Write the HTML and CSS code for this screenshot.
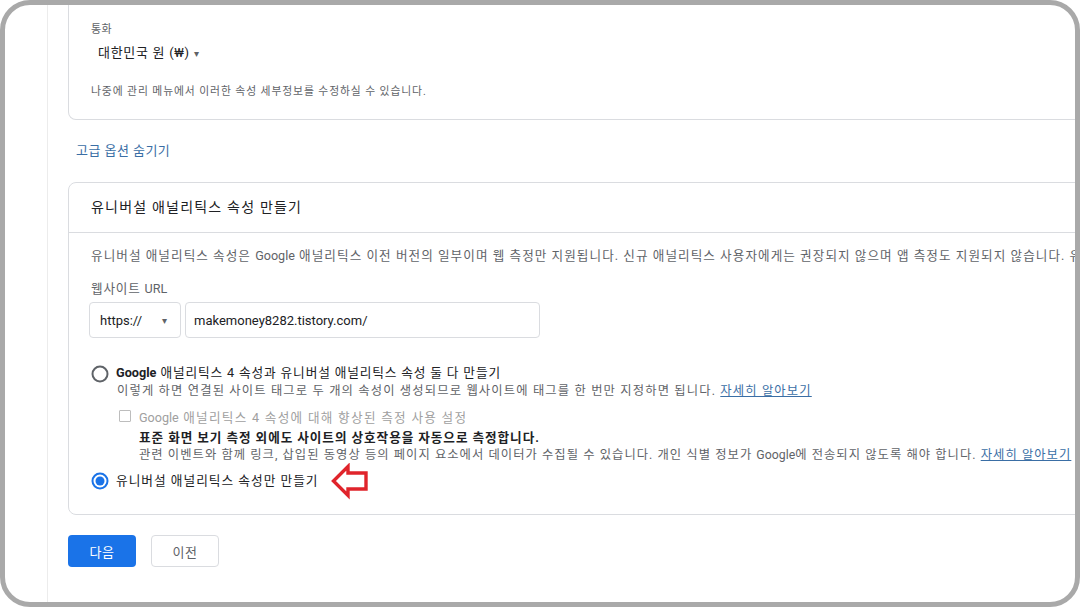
FILE: index.html
```html
<!DOCTYPE html>
<html lang="ko">
<head>
<meta charset="utf-8">
<link rel="stylesheet" href="styles.css">
</head>
<body>
<div class="frame">
  <div class="gutter"></div>
  <div class="panel">
    <div class="card card-top">
      <div class="small-label">통화</div>
      <div class="currency">대한민국 원 (₩) <span class="caret">▾</span></div>
      <div class="small-note">나중에 관리 메뉴에서 이러한 속성 세부정보를 수정하실 수 있습니다.</div>
    </div>

    <div class="adv-link">고급 옵션 숨기기</div>

    <div class="card card-ua">
      <div class="card-head">유니버설 애널리틱스 속성 만들기</div>
      <div class="card-body">
        <div class="desc">유니버설 애널리틱스 속성은 <span class="latin">Google</span> 애널리틱스 이전 버전의 일부이며 웹 측정만 지원됩니다. 신규 애널리틱스 사용자에게는 권장되지 않으며 앱 측정도 지원되지 않습니다. 유니</div>
        <div class="field-label">웹사이트 <span class="latin">URL</span></div>
        <div class="url-row">
          <div class="select-box"><span>https://</span><span class="sel-caret">▾</span></div>
          <div class="text-box">makemoney8282.tistory.com/</div>
        </div>

        <div class="option opt1">
          <svg class="radio" width="18" height="18" viewBox="0 0 18 18"><circle cx="9" cy="9" r="7.5" fill="none" stroke="#5f6368" stroke-width="2"/></svg>
          <div class="opt-text">
            <div class="opt-label"><b class="latin">Google</b> 애널리틱스 4 속성과 유니버설 애널리틱스 속성 둘 다 만들기</div>
            <div class="opt-sub">이렇게 하면 연결된 사이트 태그로 두 개의 속성이 생성되므로 웹사이트에 태그를 한 번만 지정하면 됩니다. <span class="link">자세히 알아보기</span></div>
          </div>
        </div>

        <div class="check-row">
          <span class="checkbox"></span>
          <span class="check-label"><span class="latin">Google</span> 애널리틱스 4 속성에 대해 향상된 측정 사용 설정</span>
        </div>
        <div class="enh-bold">표준 화면 보기 측정 외에도 사이트의 상호작용을 자동으로 측정합니다.</div>
        <div class="enh-sub">관련 이벤트와 함께 링크, 삽입된 동영상 등의 페이지 요소에서 데이터가 수집될 수 있습니다. 개인 식별 정보가 <span class="latin">Google</span>에 전송되지 않도록 해야 합니다. <span class="link">자세히 알아보기</span></div>

        <div class="option opt2">
          <svg class="radio" width="18" height="18" viewBox="0 0 18 18"><circle cx="9" cy="9" r="7.5" fill="none" stroke="#1a73e8" stroke-width="2"/><circle cx="9" cy="9" r="4.5" fill="#1a73e8"/></svg>
          <div class="opt-label opt2-label">유니버설 애널리틱스 속성만 만들기</div>
          <svg class="arrow" width="38" height="37" viewBox="0 0 38 37"><polygon points="2.5,18 17,3.5 17,10 35,10 35,26 17,26 17,32.5" fill="#fff" stroke="#e0242b" stroke-width="3.4" stroke-linejoin="miter"/></svg>
        </div>
      </div>
    </div>

    <div class="buttons">
      <div class="btn btn-primary">다음</div>
      <div class="btn btn-secondary">이전</div>
    </div>
  </div>
</div>
</body>
</html>
```

FILE: styles.css
```css
html, body {
  margin: 0;
  padding: 0;
  background: #fff;
}
body {
  font-family: Roboto, "Noto Sans CJK KR", sans-serif;
  color: #202124;
}
.latin {
  letter-spacing: 0;
}
.frame {
  width: 1080px;
  height: 607px;
  box-sizing: border-box;
  border: 5px solid #a9a9a9;
  border-radius: 30px;
  overflow: hidden;
  display: flex;
  background: #fff;
}
.gutter {
  width: 42px;
  flex: none;
  border-right: 1px solid #ececec;
}
.panel {
  flex: none;
  width: 1200px;
  padding-left: 20px;
}
.card {
  width: 1100px;
  border: 1px solid #dadce0;
  border-radius: 8px;
  box-sizing: border-box;
}
.card-top {
  border-top: none;
  border-radius: 0 0 8px 8px;
  padding: 17px 0 19px 22px;
}
.small-label {
  font-size: 11px;
  line-height: 16px;
  color: #5f6368;
  letter-spacing: 0.5px;
}
.currency {
  margin-top: 5px;
  padding-left: 7px;
  font-size: 13px;
  line-height: 20px;
  color: #202124;
  letter-spacing: 0.7px;
}
.caret {
  font-size: 10px;
  color: #5f6368;
}
.small-note {
  margin-top: 20px;
  font-size: 10.8px;
  line-height: 16px;
  color: #5f6368;
  letter-spacing: 0.9px;
}
.adv-link {
  margin: 21px 0 21px 8px;
  font-size: 13px;
  line-height: 20px;
  color: #3a6ea5;
  letter-spacing: 0.45px;
}
.card-head {
  padding: 13px 22px 14px;
  font-size: 14px;
  line-height: 22px;
  color: #202124;
  border-bottom: 1px solid #dadce0;
  letter-spacing: 1.2px;
}
.card-body {
  padding: 14px 0 23px 22px;
}
.desc {
  font-size: 12.6px;
  line-height: 18px;
  color: #5f6368;
  white-space: nowrap;
  letter-spacing: 1.05px;
}
.field-label {
  margin-top: 15px;
  font-size: 12.6px;
  line-height: 18px;
  color: #5f6368;
  letter-spacing: 0.8px;
}
.url-row {
  margin-top: 4px;
  margin-left: -2px;
  display: flex;
  gap: 4px;
}
.select-box, .text-box {
  height: 36px;
  box-sizing: border-box;
  border: 1px solid #dadce0;
  border-radius: 4px;
  display: flex;
  align-items: center;
  font-size: 13px;
  color: #202124;
}
.select-box {
  width: 92px;
  padding: 0 13px 0 10px;
  justify-content: space-between;
}
.sel-caret {
  font-size: 10px;
  color: #5f6368;
}
.text-box {
  width: 355px;
  padding-left: 8px;
}
.option {
  display: flex;
  align-items: flex-start;
}
.radio {
  flex: none;
  margin-right: 7px;
}
.opt1 {
  margin-top: 26px;
}
.opt1 .radio {
  margin-top: 1px;
}
.opt-label {
  font-size: 12.7px;
  line-height: 18px;
  color: #202124;
  white-space: nowrap;
  letter-spacing: 0.85px;
}
.opt-label b {
  font-weight: 700;
}
.opt-sub {
  margin-left: 1px;
  font-size: 12.3px;
  line-height: 18px;
  color: #5f6368;
  white-space: nowrap;
  letter-spacing: 1.15px;
}
.link {
  color: #3a6ea5;
  text-decoration: underline;
}
.check-row {
  margin-top: 7px;
  margin-left: 28px;
  display: flex;
  align-items: center;
  height: 18px;
}
.checkbox {
  width: 10px;
  height: 10px;
  border: 1.5px solid #bdbdbd;
  border-radius: 1px;
  margin-right: 8px;
}
.check-label {
  font-size: 12.6px;
  color: #a0a0a0;
  white-space: nowrap;
  letter-spacing: 1.3px;
}
.enh-bold {
  margin-top: 4px;
  margin-left: 48px;
  font-size: 12.6px;
  line-height: 18px;
  font-weight: 700;
  color: #202124;
  white-space: nowrap;
  letter-spacing: 0.95px;
}
.enh-sub {
  margin-left: 48px;
  font-size: 12.3px;
  line-height: 17px;
  color: #5f6368;
  white-space: nowrap;
  letter-spacing: 1.05px;
}
.opt2 {
  margin-top: 7px;
  align-items: center;
  height: 20px;
}
.opt2-label {
  letter-spacing: 1px;
}
.arrow {
  flex: none;
  margin-left: 12px;
  margin-top: 1px;
}
.buttons {
  margin-top: 20px;
  display: flex;
  gap: 15px;
}
.btn {
  width: 68px;
  height: 32px;
  box-sizing: border-box;
  border-radius: 4px;
  display: flex;
  align-items: center;
  justify-content: center;
  font-size: 13px;
  letter-spacing: 0.5px;
}
.btn-primary {
  background: #1a73e8;
  color: #fff;
}
.btn-secondary {
  border: 1px solid #dadce0;
  color: #5f6368;
  background: #fff;
}
```
